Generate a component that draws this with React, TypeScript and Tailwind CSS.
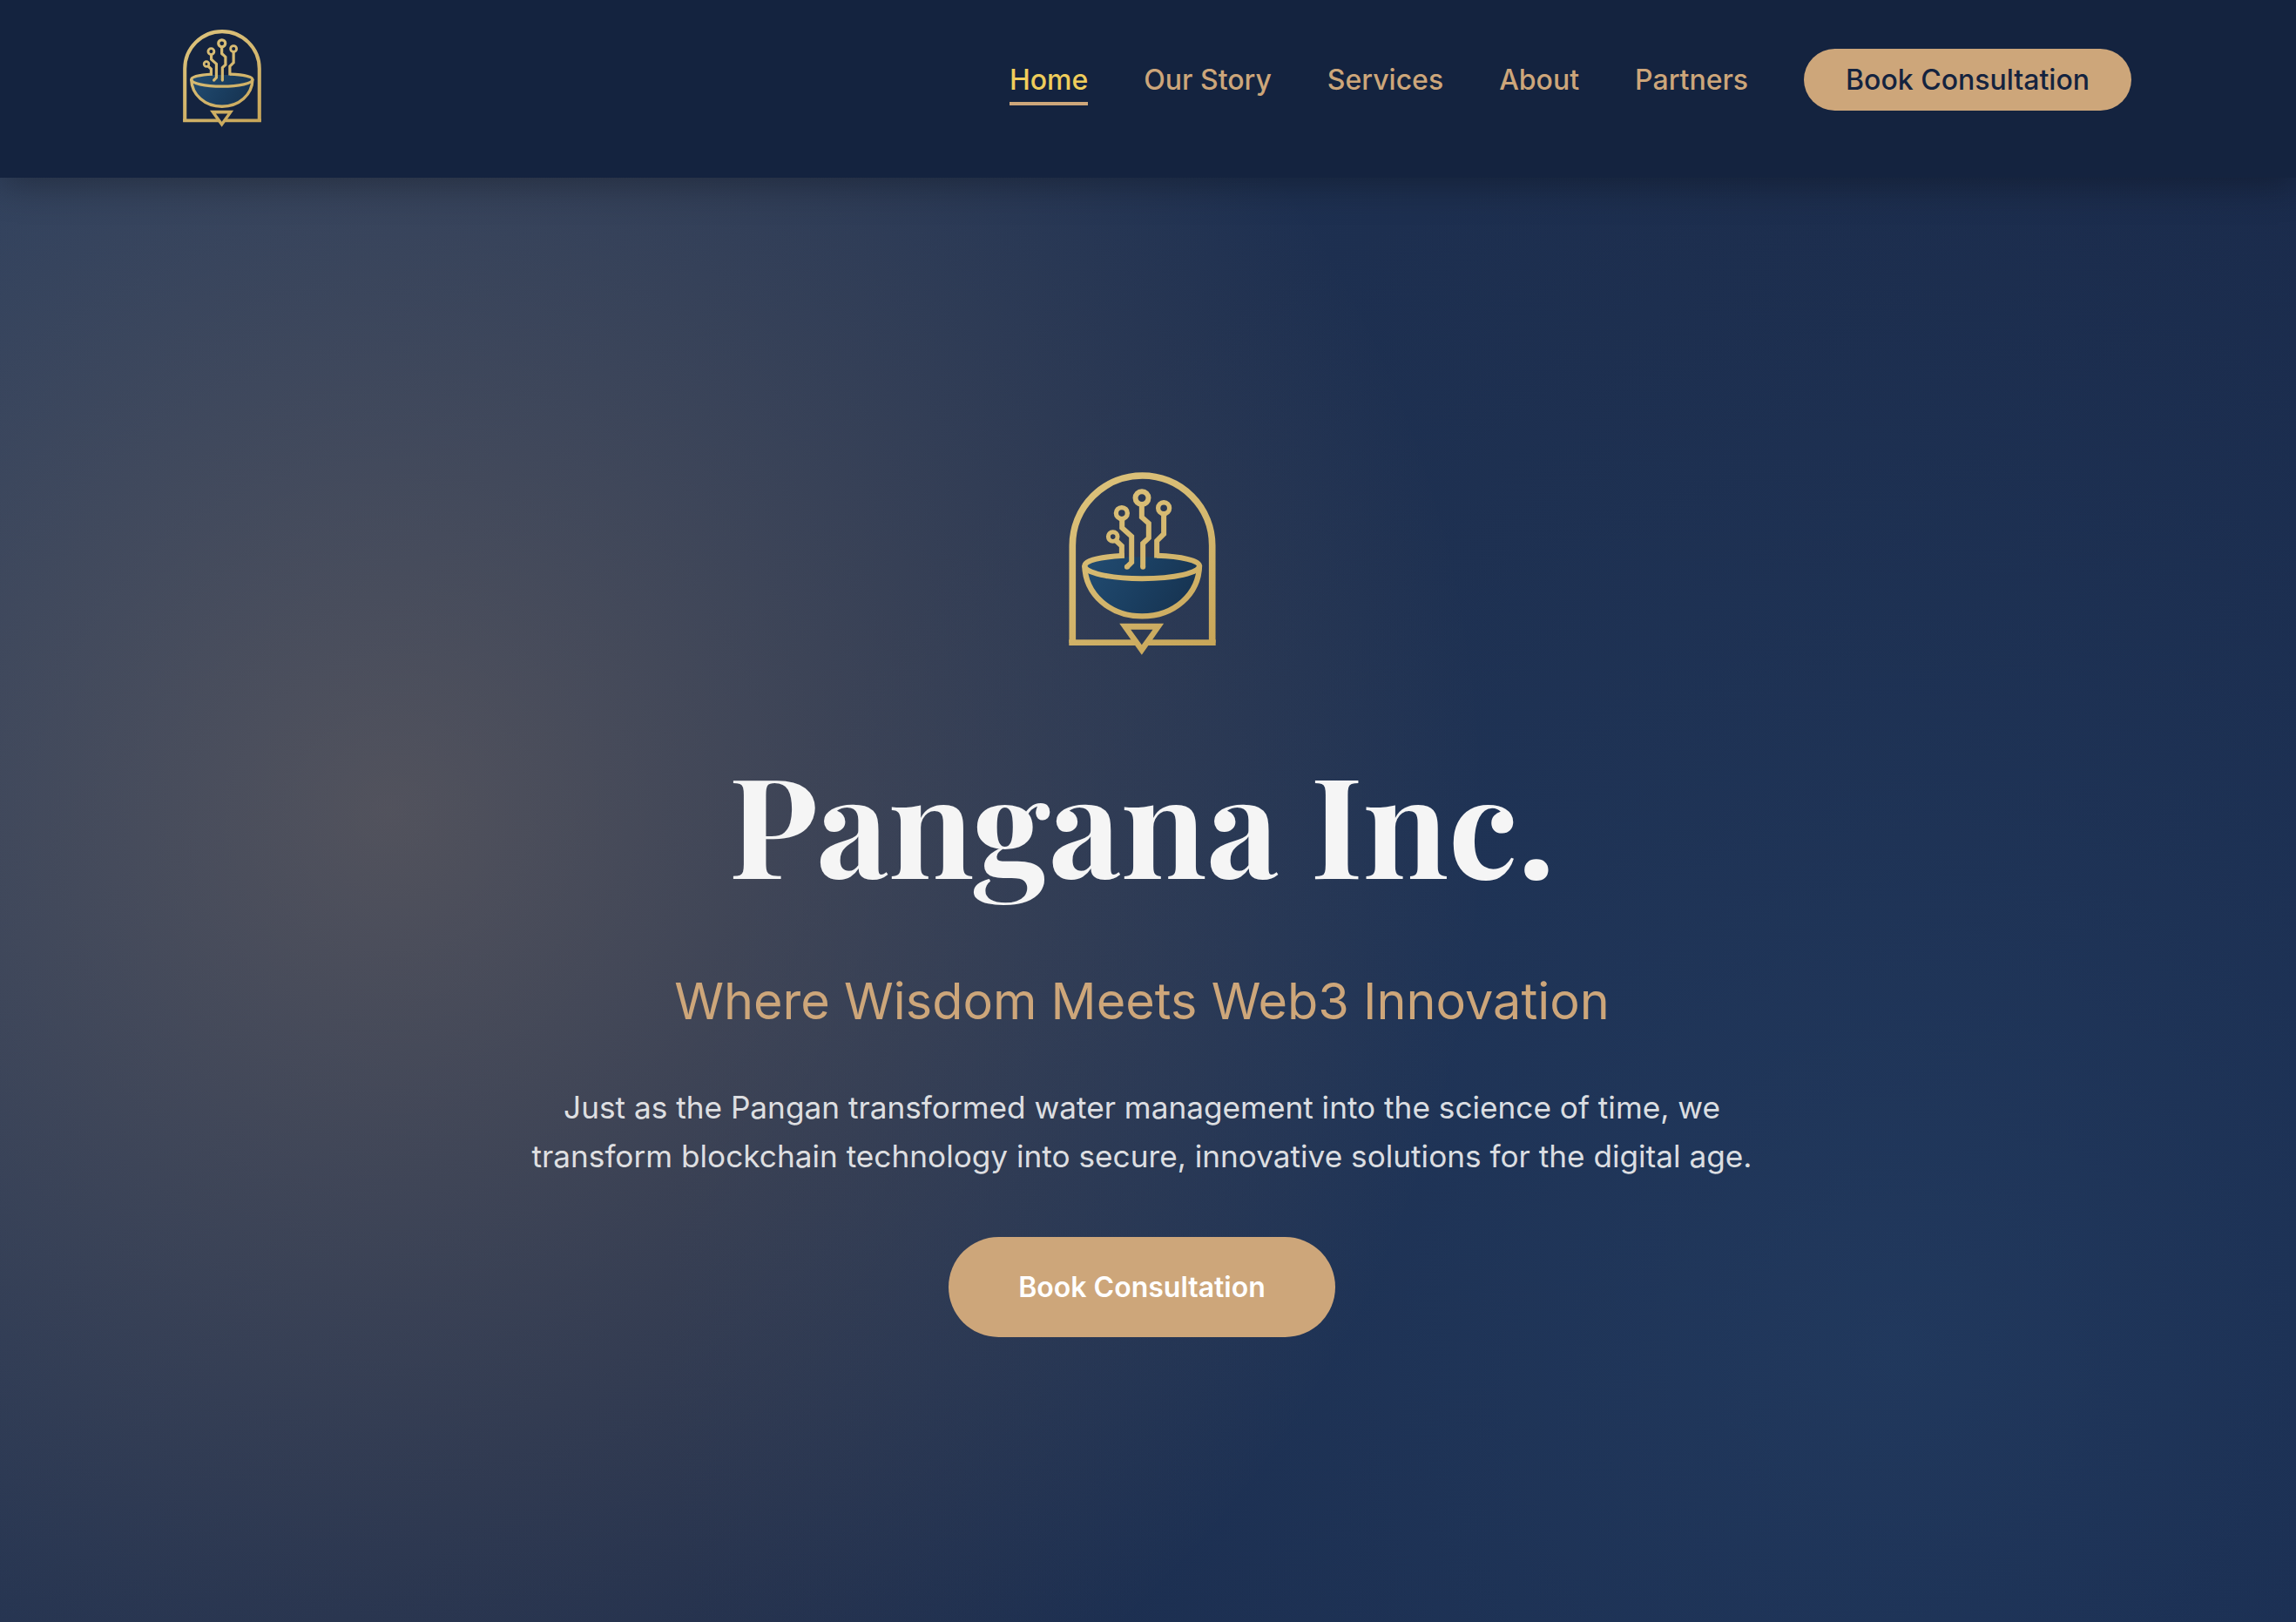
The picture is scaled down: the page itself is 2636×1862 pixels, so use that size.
type LogoProps = { id: string; className: string };

function Logo({ id, className }: LogoProps) {
  const gold = `url(#${id}-gold)`;
  const water = `url(#${id}-water)`;
  return (
    <svg viewBox="81 65 506 631" className={className} fill="none" role="img" aria-label="Pangana logo">
      <defs>
        <linearGradient id={`${id}-gold`} gradientUnits="userSpaceOnUse" x1="140" y1="80" x2="500" y2="690">
          <stop offset="0" stopColor="#dcc27b" />
          <stop offset="0.5" stopColor="#d4b76e" />
          <stop offset="1" stopColor="#c8a659" />
        </linearGradient>
        <linearGradient id={`${id}-water`} gradientUnits="userSpaceOnUse" x1="180" y1="360" x2="470" y2="540">
          <stop offset="0" stopColor="#214a6f" />
          <stop offset="0.55" stopColor="#1a3e60" />
          <stop offset="1" stopColor="#173452" />
        </linearGradient>
      </defs>
      {/* arch */}
      <path d="M93 653V318A241 241 0 0 1 575 318V653" stroke={gold} strokeWidth="23" />
      <path d="M81 653H312M352 653H587" stroke={gold} strokeWidth="20" />
      {/* bowl */}
      <path d="M136 388C138 372 200 358 270 358H385C465 362 530 374 530 390C530 490 450 562 333 562S140 490 136 388Z" fill={water} />
      <path
        d="M272 353C190 357 135 370 135 388C135 412 220 432 333 432S531 412 531 388C531 370 470 356 384 353"
        stroke={gold}
        strokeWidth="18"
      />
      <path d="M135 386C137 486 222 562 333 562S529 486 531 386" stroke={gold} strokeWidth="19" />
      {/* circuit stems */}
      <g stroke={gold} strokeWidth="18" strokeLinejoin="miter">
        <circle cx="232.500" cy="287.500" r="16" strokeWidth="15" />
        <path d="M243 301L263 320V360" />
        <circle cx="263" cy="206.500" r="19.500" strokeWidth="16" />
        <path d="M264 226V257L297 287V376L281 392" />
        <circle cx="332.500" cy="154" r="22.500" strokeWidth="18" />
        <path d="M332 176V220L356 242V292L336 311V392" />
        <circle cx="408" cy="189" r="19.500" strokeWidth="16" />
        <path d="M408 208V278L384 302V361" />
        <path d="M281 392h.1M336 392h.1" strokeLinecap="round" />
      </g>
      {/* pointer */}
      <path fillRule="evenodd" d="M255 587H408L332 695ZM294 608L332 661L370 608Z" fill={gold} />
    </svg>
  );
}

const links = ['Our Story', 'Services', 'About', 'Partners'];

export default function App() {
  return (
    <div className="flex h-[1862px] w-full flex-col overflow-hidden bg-[radial-gradient(circle_1262px_at_446px_931px,rgba(200,158,115,0.3)_0%,rgba(200,158,115,0)_100%),radial-gradient(circle_1415px_at_2176px_1545px,rgba(53,93,137,0.3)_0%,rgba(53,93,137,0)_100%),linear-gradient(135deg,#22395d_0%,#1c2d4d_50%,#162648_100%)] font-['Inter',sans-serif] text-[32px] leading-[1.6]">
      <header className="flex h-[204px] shrink-0 items-start justify-between bg-[#14233f] pl-[210px] pr-[189px] shadow-[0_8px_40px_rgba(0,0,0,0.3)]">
        <Logo id="nav-logo" className="mt-[33.500px] h-[112px] w-[90px]" />
        <nav className="mt-[56px] flex items-center gap-16 font-medium text-[#cda67a]">
          <a className="relative text-[#efcd5b]">
            Home
            <span className="absolute inset-x-0 -bottom-1 h-1 bg-[#cda67a]" />
          </a>
          {links.map((label) => (
            <a key={label}>{label}</a>
          ))}
          <button className="flex h-[71px] items-center rounded-full bg-[#cda67a] px-12 text-[#14233f]">
            Book Consultation
          </button>
        </nav>
      </header>
      <main className="flex flex-col items-center pr-[14px] pt-[338px] text-center">
        <Logo id="hero-logo" className="h-[210px] w-[169px]" />
        <h1 className="mt-[95px] font-['Playfair_Display','Liberation_Serif',serif] text-[160px] font-bold leading-[192px] text-[#f5f5f5]">
          Pangana Inc.
        </h1>
        <p className="mt-16 text-[57.600px] leading-[92.160px] text-[#cda67a]">Where Wisdom Meets Web3 Innovation</p>
        <p className="mt-12 max-w-[1410px] text-[35.200px] leading-[56.320px] text-[#f5f5f5]/90">
          Just as the Pangan transformed water management into the science of time, we transform blockchain technology
          into secure, innovative solutions for the digital age.
        </p>
        <button className="mt-16 flex h-[115px] items-center rounded-full bg-[#cda67a] px-20 font-semibold text-white">
          Book Consultation
        </button>
      </main>
    </div>
  );
}
